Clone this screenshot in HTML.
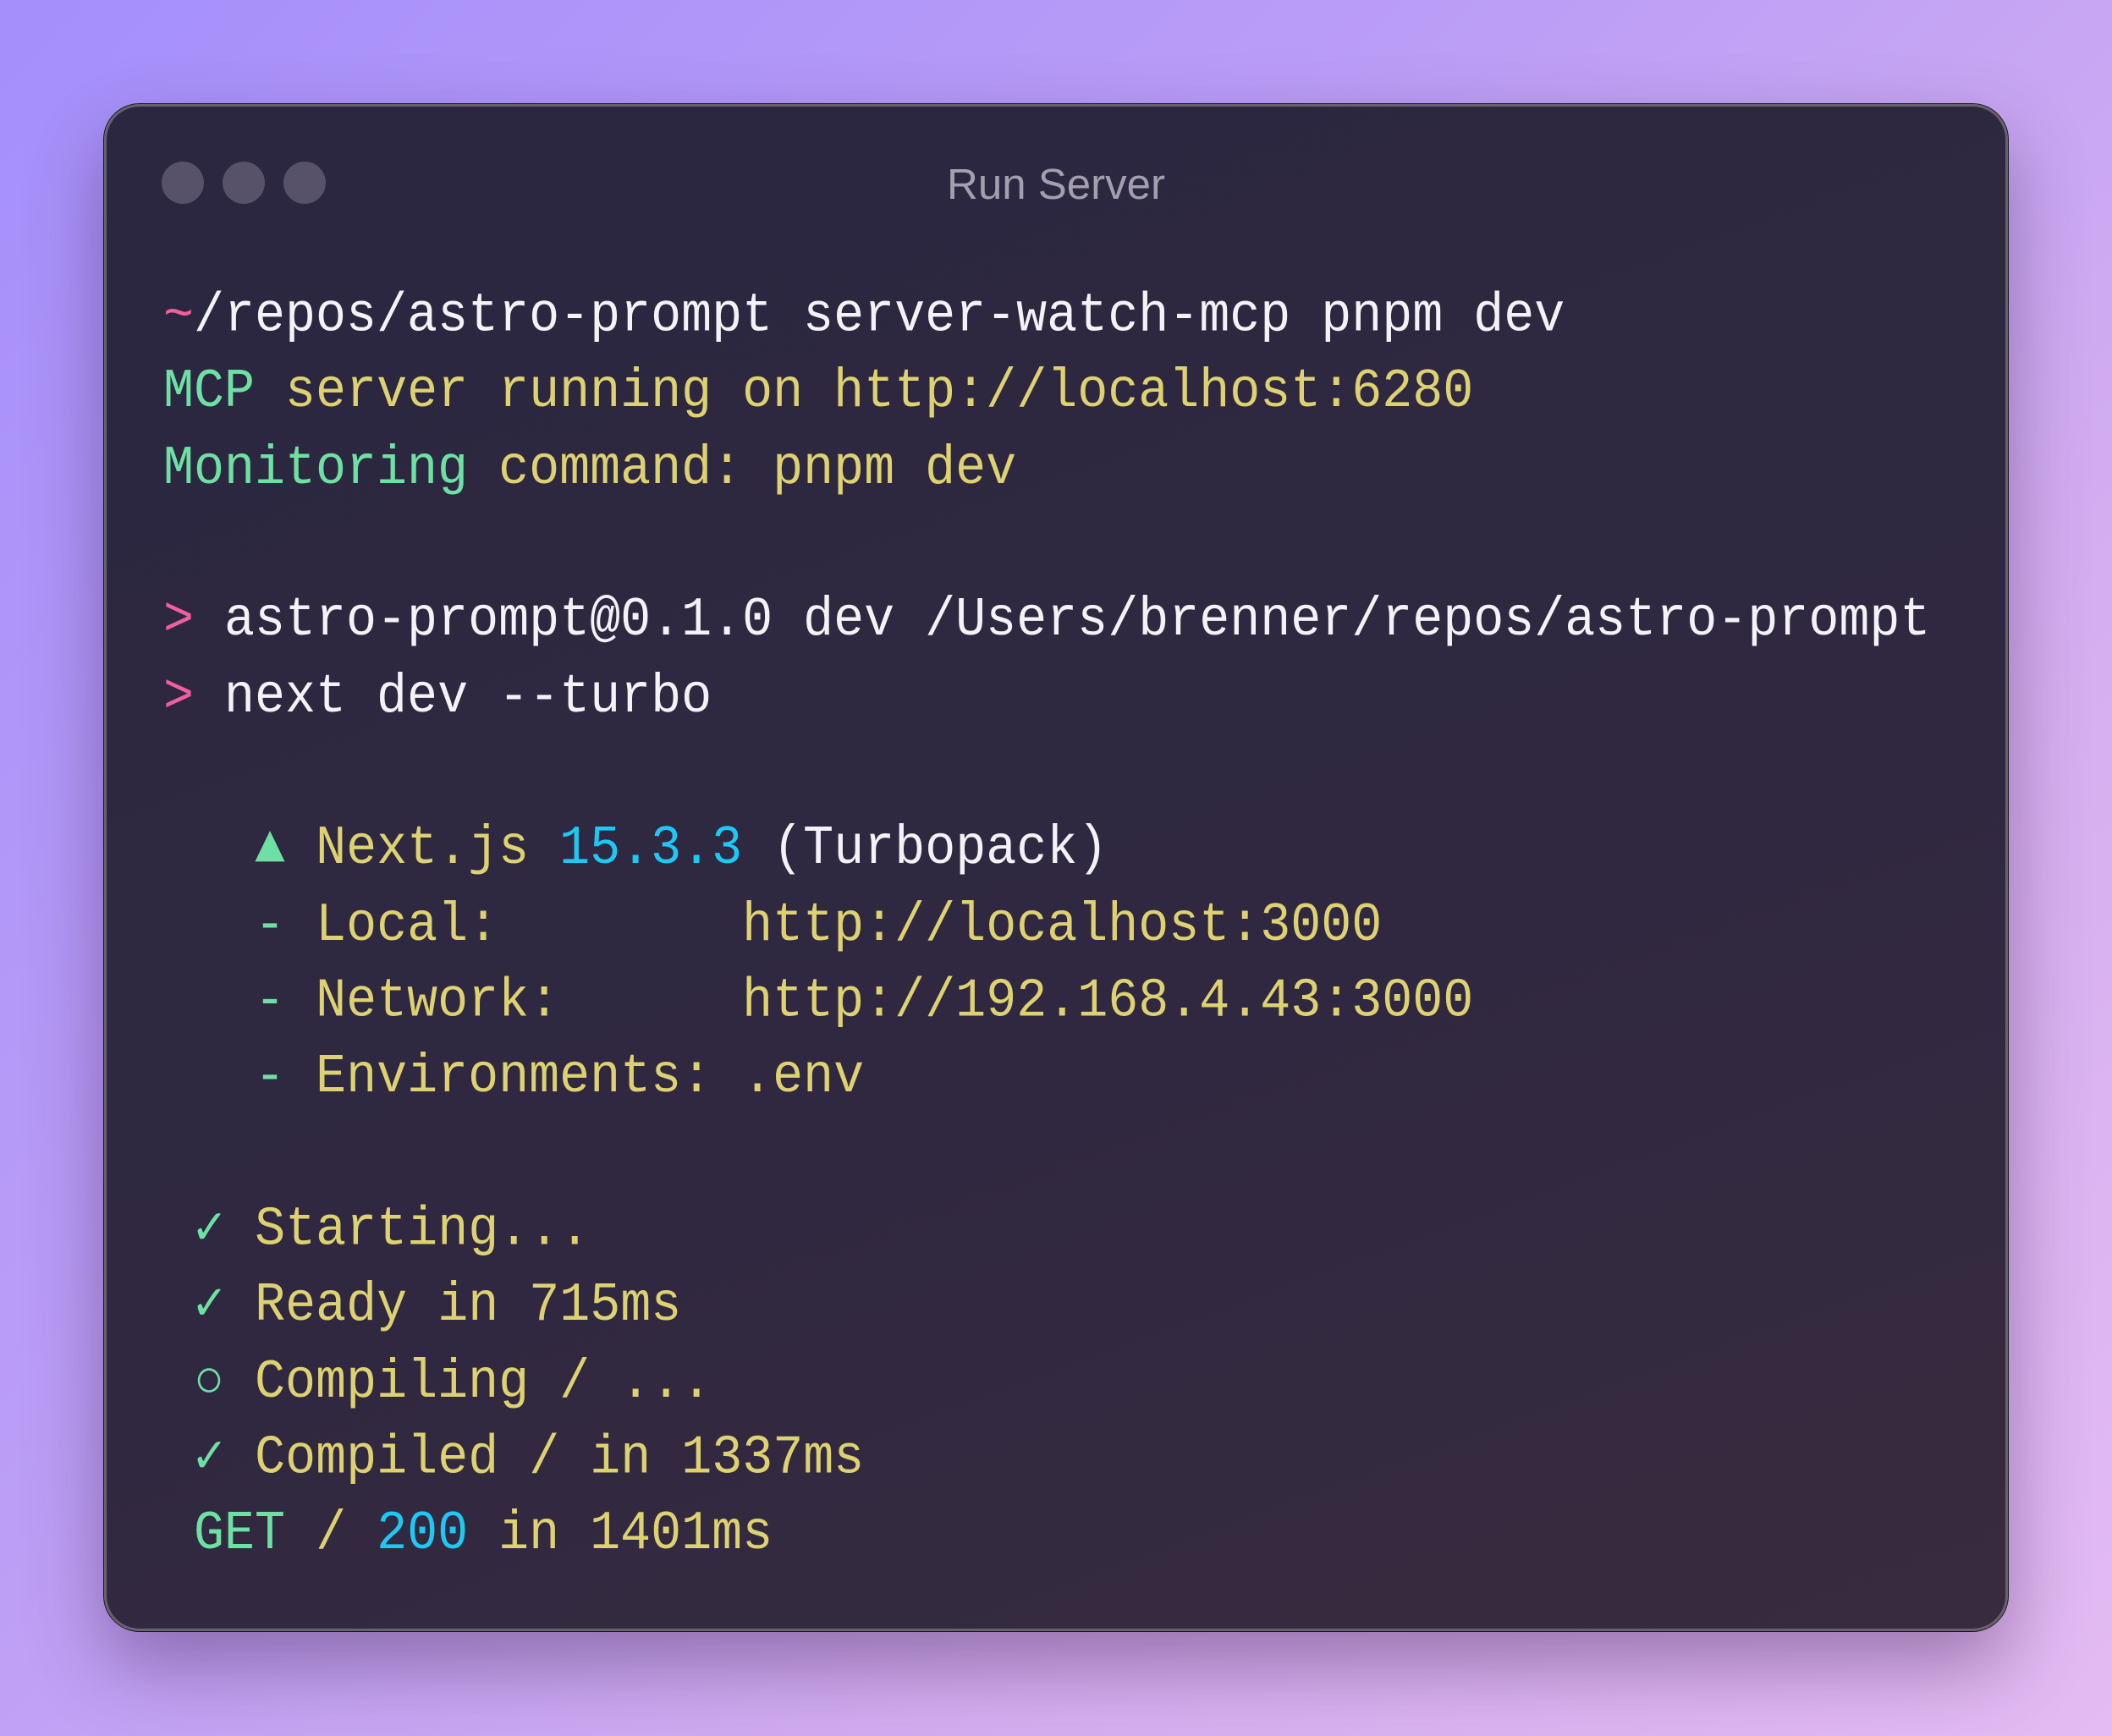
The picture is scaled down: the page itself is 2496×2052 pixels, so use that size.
<!DOCTYPE html>
<html><head><meta charset="utf-8"><style>
html,body{margin:0;padding:0}
body{width:2496px;height:2052px;overflow:hidden;position:relative;
background:linear-gradient(135deg,#a48ffb 0%,#bc9ef6 40%,#d4aef0 70%,#e4bbf2 100%);}
.win{position:absolute;left:123px;top:123px;width:2250px;height:1805px;box-sizing:border-box;
border-radius:42px;border:3px solid #67616e;outline:1px solid #1c1822;
background:linear-gradient(160deg,#2b2740 0%,#2f2840 55%,#382b3f 100%);
box-shadow:0 40px 90px rgba(70,40,90,.45);}
.dot{position:absolute;top:191px;width:50px;height:50px;border-radius:50%;background:#57526a}
.title{position:absolute;left:0;width:2496px;top:190px;text-align:center;
font:51px "Liberation Sans",sans-serif;color:#a39fae;line-height:56px}
pre{position:absolute;left:193px;top:330px;margin:0;font:60px/83.33px "Liberation Mono","DejaVu Sans Mono",monospace;color:#f4f2f6;
transform:scaleY(1.08);transform-origin:0 0}
.p{color:#f25f9c}.g{color:#6fe0a3}.y{color:#ddd172}.c{color:#1ec8f5}.w{color:#f4f2f6}
</style></head><body>
<div class="win"></div>
<div class="dot" style="left:191px"></div>
<div class="dot" style="left:263px"></div>
<div class="dot" style="left:335px"></div>
<div class="title">Run Server</div>
<pre><span class="p">~</span>/repos/astro-prompt server-watch-mcp pnpm dev
<span class="g">MCP</span> <span class="y">server running on http://localhost:6280</span>
<span class="g">Monitoring</span> <span class="y">command: pnpm dev</span>

<span class="p">&gt;</span> astro-prompt@0.1.0 dev /Users/brenner/repos/astro-prompt
<span class="p">&gt;</span> next dev --turbo

   <span class="g">▲</span> <span class="y">Next.js</span> <span class="c">15.3.3</span> (Turbopack)
   <span class="g">-</span> <span class="y">Local:        http://localhost:3000</span>
   <span class="g">-</span> <span class="y">Network:      http://192.168.4.43:3000</span>
   <span class="g">-</span> <span class="y">Environments: .env</span>

 <span class="g">✓</span> <span class="y">Starting...</span>
 <span class="g">✓</span> <span class="y">Ready in 715ms</span>
 <span class="g">○</span> <span class="y">Compiling / ...</span>
 <span class="g">✓</span> <span class="y">Compiled / in 1337ms</span>
 <span class="g">GET</span> <span class="y">/</span> <span class="c">200</span> <span class="y">in 1401ms</span></pre>
</body></html>
